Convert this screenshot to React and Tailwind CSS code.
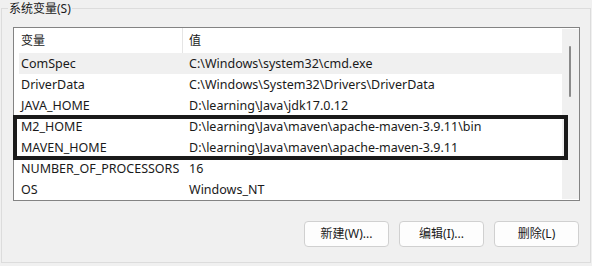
import React from 'react';

const ROWS = [
  ['ComSpec', 'C:\\Windows\\system32\\cmd.exe'],
  ['DriverData', 'C:\\Windows\\System32\\Drivers\\DriverData'],
  ['JAVA_HOME', 'D:\\learning\\Java\\jdk17.0.12'],
  ['M2_HOME', 'D:\\learning\\Java\\maven\\apache-maven-3.9.11\\bin'],
  ['MAVEN_HOME', 'D:\\learning\\Java\\maven\\apache-maven-3.9.11'],
  ['NUMBER_OF_PROCESSORS', '16'],
  ['OS', 'Windows_NT']
];

const DialogButton = ({ children }) => (
  <button className="w-[85px] h-[26px] rounded-[4px] border border-[#d0d0d0] bg-[#fdfdfd] text-[12px] text-[#1a1a1a]">
    {children}
  </button>
);

export default function App() {
  return (
    <div className="w-[592px] h-[266px] bg-[#f0f0f0] pt-2 pl-px text-[12px] leading-[16px] text-[#1a1a1a] font-['Noto_Sans','Noto_Sans_CJK_SC',sans-serif]">
      <div className="relative w-[590px] h-[255px] border border-[#dcdcdc]">
        <span className="absolute left-[6px] -top-[8px] px-[1px] bg-[#f0f0f0]">系统变量(S)</span>

        <div className="relative mt-[18px] ml-[11px] w-[567px] h-[174px] border border-[#838383] bg-white flex">
          <div className="flex-1">
            <div className="flex h-[25px] items-center">
              <div className="w-[169px] h-full pl-[7px] flex items-center border-r border-[#e5e5e5]">变量</div>
              <div className="pl-[6px]">值</div>
            </div>
            <div className="pl-[5px] text-[12.5px]">
              {ROWS.map(([name, value], i) => (
                <div
                  key={name}
                  className={`flex h-[21px] items-center ${i === 0 ? 'bg-[#f0f0f0]' : ''}`}
                >
                  <div className="w-[168px] pl-[2px] whitespace-nowrap">{name}</div>
                  <div className="pl-[2px] whitespace-nowrap">{value}</div>
                </div>
              ))}
            </div>
          </div>
          <div className="w-[17px] my-[1px] bg-[#f0f0f0] pt-[17px] pl-[7px]">
            <div className="w-[2px] h-[51px] bg-[#8a8a8a] rounded-full" />
          </div>

          <div className="absolute -left-px top-[87px] w-[555px] h-[45px] border-4 border-[#1a1a1a]" />
        </div>

        <div className="flex justify-end gap-[10px] pr-[11px] mt-[20px]">
          <DialogButton>新建(W)...</DialogButton>
          <DialogButton>编辑(I)...</DialogButton>
          <DialogButton>删除(L)</DialogButton>
        </div>
      </div>
    </div>
  );
}
